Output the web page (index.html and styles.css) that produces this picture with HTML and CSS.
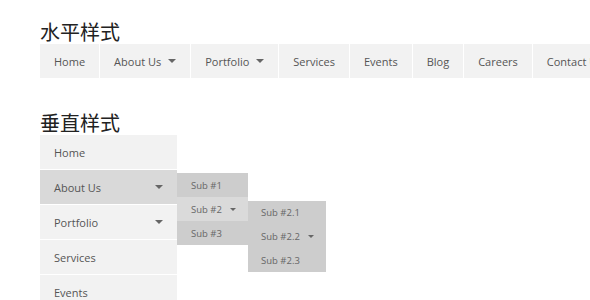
FILE: index.html
```html
<!DOCTYPE html>
<html>
<head>
<meta charset="utf-8">
<link rel="stylesheet" href="styles.css">
</head>
<body>
<div class="page">
  <h2 class="title">水平样式</h2>
  <ul class="hnav">
    <li>Home</li>
    <li>About Us<span class="caret"></span></li>
    <li>Portfolio<span class="caret"></span></li>
    <li>Services</li>
    <li>Events</li>
    <li>Blog</li>
    <li>Careers</li>
    <li>Contact Us</li>
  </ul>

  <h2 class="title title-v">垂直样式</h2>
  <ul class="vnav">
    <li><span class="label">Home</span></li>
    <li class="active"><span class="label">About Us</span><span class="caret"></span>
      <ul class="sub sub1">
        <li>Sub #1</li>
        <li class="hover">Sub #2<span class="caret small"></span>
          <ul class="sub sub2">
            <li>Sub #2.1</li>
            <li>Sub #2.2<span class="caret small"></span></li>
            <li>Sub #2.3</li>
          </ul>
        </li>
        <li>Sub #3</li>
      </ul>
    </li>
    <li><span class="label">Portfolio</span><span class="caret"></span></li>
    <li><span class="label">Services</span></li>
    <li><span class="label">Events</span></li>
  </ul>
</div>
</body>
</html>
```

FILE: styles.css
```css
html, body {
  margin: 0;
  padding: 0;
  background: #fff;
  overflow: hidden;
}
.page {
  padding-left: 40px;
  padding-top: 20px;
  font-family: "Open Sans", "Noto Sans", sans-serif;
  color: #555;
}
.title {
  margin: 0;
  font-family: "Noto Sans CJK SC", sans-serif;
  font-weight: normal;
  font-size: 20px;
  line-height: 24px;
  color: #222;
}
.title-v {
  margin-top: 33px;
}
ul {
  list-style: none;
  margin: 0;
  padding: 0;
}
.hnav {
  display: flex;
  white-space: nowrap;
}
.hnav > li {
  flex: none;
  display: flex;
  align-items: center;
  height: 34px;
  padding: 0 14px;
  background: #f2f2f2;
  border-right: 1px solid #fff;
  font-size: 11px;
  color: #555;
}
.services {
  padding: 0 13px;
}
.caret {
  display: inline-block;
  width: 0;
  height: 0;
  border-left: 4px solid transparent;
  border-right: 4px solid transparent;
  border-top: 4px solid #666;
  margin-left: 7px;
}
.caret.small {
  border-left-width: 3.5px;
  border-right-width: 3.5px;
  border-top-width: 3.5px;
  margin-left: 8px;
}
.vnav {
  width: 137px;
}
.vnav > li {
  position: relative;
  display: flex;
  align-items: center;
  height: 34px;
  padding: 0 14px;
  background: #f2f2f2;
  border-bottom: 1px solid #fff;
  font-size: 11px;
  color: #555;
}
.vnav > li .label {
  flex: 1;
}
.vnav > li.active {
  background: #d9d9d9;
}
.sub {
  position: absolute;
  background: #cdcdcd;
}
.sub > li {
  position: relative;
  display: flex;
  align-items: center;
  height: 24px;
  padding: 0 14px;
  font-size: 9.5px;
  color: #666;
  white-space: nowrap;
}
.sub1 {
  left: 137px;
  top: 3px;
  width: 71px;
}
.sub1 > li.hover {
  background: #dadada;
}
.sub2 {
  left: 71px;
  top: 4px;
  width: 78px;
}
.sub2 > li {
  height: 23.7px;
  padding: 0 13px;
}
```
